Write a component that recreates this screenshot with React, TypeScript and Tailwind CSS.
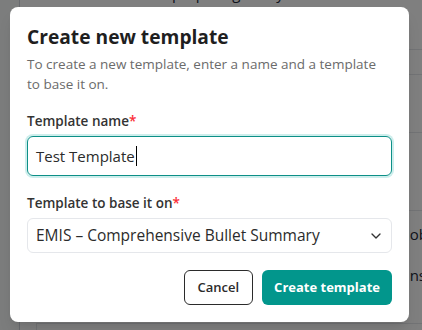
import React from 'react';
import { ChevronDown } from 'lucide-react';

const font = { fontFamily: '"Open Sans", "Noto Sans", sans-serif' };

const Backdrop: React.FC = () => (
  <div className="absolute inset-0 flex bg-white">
    <div className="w-[20px] border-r border-gray-300 bg-gray-50" />
    <div className="flex flex-1 flex-col">
      <div className="h-[50px] border-b border-gray-200 pl-[80px]">
        <div className="-mt-[18px] text-[15px] text-gray-800">Notes are preparing today</div>
      </div>
      <div className="h-[25px] border-b border-gray-200" />
      <div className="h-[58px] border-b border-gray-200" />
      <div className="h-[78px] border-b border-gray-200" />
      <div className="flex flex-1 flex-col items-end text-[15px] text-gray-800">
        <div className="mt-[12px] -mr-[6px]">Job</div>
        <div className="mt-[18px] -mr-[4px]">ns</div>
      </div>
      <div className="ml-[16px] h-[7px] border-l border-t border-gray-200" />
    </div>
  </div>
);

const App: React.FC = () => {
  return (
    <div className="relative h-[330px] w-[422px] overflow-hidden" style={font}>
      <Backdrop />
      <div className="absolute inset-0 bg-black/50" />

      <div className="absolute left-[10px] top-[7px] w-[399px] rounded-lg bg-white px-[17px] pt-[16px] pb-[17px] shadow-lg">
        <h2 className="text-[19.2px] font-bold leading-[28px] text-[#1f1f1f]">Create new template</h2>
        <p className="mt-[3px] text-[13.5px] leading-[20px] text-[#6b6b6b]">
          To create a new template, enter a name and a template to base it on.
        </p>

        <label className="mt-[17px] block text-[13.5px] font-semibold leading-[20px] text-[#333]">
          Template name<span className="text-red-500">*</span>
        </label>
        <div className="mt-[5px] flex h-[40px] items-center rounded-md border border-[#0d8f87] px-[8px] ring-2 ring-[#cdeeec]">
          <span className="text-[15px] text-[#2b2b2b]">Test Template</span>
          <span className="ml-[1px] h-[20px] w-px bg-black" />
        </div>

        <label className="mt-[17px] block text-[13.5px] font-semibold leading-[20px] text-[#333]">
          Template to base it on<span className="text-red-500">*</span>
        </label>
        <div className="mt-[5px] flex h-[35px] items-center justify-between rounded-md border border-gray-200 pl-[8px] pr-[7px]">
          <span className="text-[15.5px] text-[#2b2b2b]">EMIS – Comprehensive Bullet Summary</span>
          <ChevronDown className="h-[16px] w-[16px] text-[#333]" strokeWidth={2} />
        </div>

        <div className="mt-[17px] flex justify-end gap-[9px]">
          <button className="h-[35px] rounded-md border border-[#2b2b2b] px-[13px] text-[13px] font-semibold text-[#2b2b2b]">
            Cancel
          </button>
          <button className="h-[35px] rounded-md bg-[#02968c] px-[12px] text-[13px] font-bold text-white">
            Create template
          </button>
        </div>
      </div>
    </div>
  );
};

export default App;
